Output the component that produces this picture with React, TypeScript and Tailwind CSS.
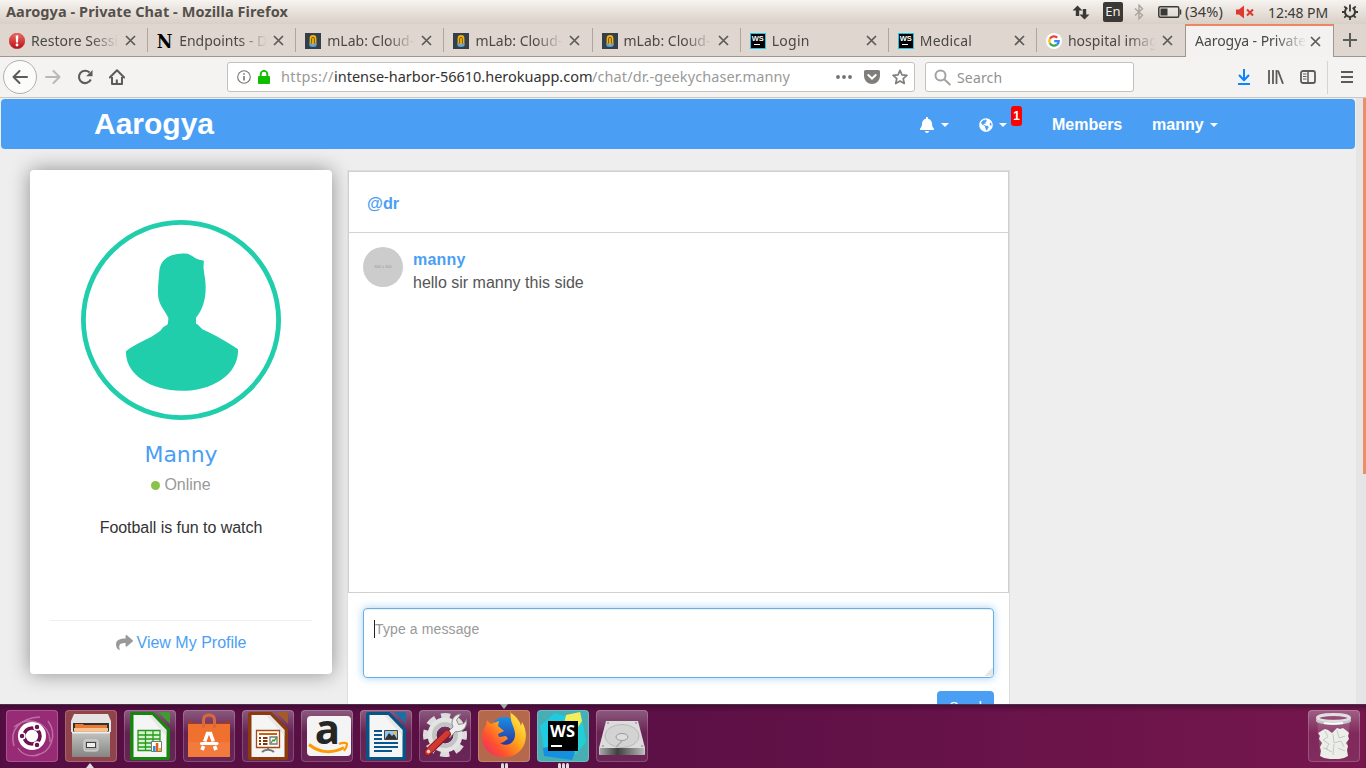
import React from "react";
import { FaBell, FaGlobeAmericas, FaShare } from "react-icons/fa";

const UI = "font-['Noto_Sans',sans-serif]";

function Close() {
  return (
    <svg className="h-[11px] w-[11px] shrink-0" viewBox="0 0 11 11" stroke="#5b5b58" strokeWidth="1.7">
      <path d="M1 1L10 10M10 1L1 10" />
    </svg>
  );
}

function ErrorIcon() {
  return (
    <svg className="h-4 w-4" viewBox="0 0 16 16">
      <defs>
        <linearGradient id="err" x1="0" y1="0" x2="0" y2="1">
          <stop offset="0" stopColor="#ee6a63" />
          <stop offset="1" stopColor="#b80f1a" />
        </linearGradient>
      </defs>
      <circle cx="8" cy="8" r="7.8" fill="url(#err)" stroke="#b3282a" strokeWidth=".5" />
      <path d="M6.7 2.5h2.6L9 9.5H7z" fill="#fff" />
      <circle cx="8" cy="12" r="1.4" fill="#fff" />
    </svg>
  );
}

function MLab() {
  return (
    <svg className="h-4 w-4" viewBox="0 0 16 16">
      <rect width="16" height="16" fill="#353f4a" />
      <path d="M4.6 12V5.5a3.4 3.4 0 0 1 6.8 0V12z" fill="#f2b310" />
      <path d="M6.6 11V5.8a1.4 1.4 0 0 1 2.8 0V11" fill="none" stroke="#6b4c10" strokeWidth=".9" />
      <path d="M4.6 10h2v1.5h2.8V10h2v3.2c-2 1-4.8 1-6.8 0z" fill="#5ba3dc" />
    </svg>
  );
}

function WsSmall() {
  return (
    <div className="flex h-4 w-4 flex-col border border-[#1fc3e8] bg-black pl-px">
      <span className="font-['Liberation_Sans',sans-serif] text-[7.5px] font-bold leading-[9px] text-white">WS</span>
      <span className="ml-[2px] mt-[1px] h-px w-[6px] bg-white" />
    </div>
  );
}

function Google() {
  return (
    <svg className="h-4 w-4" viewBox="0 0 16 16">
      <circle cx="8" cy="8" r="8" fill="#fff" />
      <g fill="none" strokeWidth="2.3">
        <path d="M11.2 4.6A4.7 4.7 0 0 0 3.9 5.7" stroke="#ea4335" />
        <path d="M3.9 5.7A4.7 4.7 0 0 0 3.9 10.3" stroke="#fbbc05" />
        <path d="M3.9 10.3A4.7 4.7 0 0 0 11 11.6" stroke="#34a853" />
        <path d="M11 11.6A4.7 4.7 0 0 0 12.7 8.1H8.2" stroke="#4285f4" />
      </g>
    </svg>
  );
}

function SlabN() {
  return (
    <span className="block h-4 w-4 text-center font-['DejaVu_Serif',serif] text-[19px] font-bold leading-[16px] text-black">
      <span className="inline-block -translate-x-px scale-x-90">N</span>
    </span>
  );
}

const tabs: { title: string; icon: React.ReactNode; track: string }[] = [
  { title: "Restore Session", icon: <ErrorIcon />, track: "tracking-[0.05px]" },
  { title: "Endpoints - Dev", icon: <SlabN />, track: "tracking-[0px]" },
  { title: "mLab: Cloud-H", icon: <MLab />, track: "tracking-[0px]" },
  { title: "mLab: Cloud-H", icon: <MLab />, track: "tracking-[0px]" },
  { title: "mLab: Cloud-H", icon: <MLab />, track: "tracking-[0px]" },
  { title: "Login", icon: <WsSmall />, track: "tracking-[0.3px]" },
  { title: "Medical", icon: <WsSmall />, track: "tracking-[0.2px]" },
  { title: "hospital images", icon: <Google />, track: "tracking-[0.05px]" },
];

const fade = "[mask-image:linear-gradient(to_right,#000_60px,transparent_88px)]";

function TitleBar() {
  return (
    <div className={`${UI} flex h-6 shrink-0 items-center justify-between bg-gradient-to-b from-[#f6f3f0] to-[#d9cfc6] pl-[6px] pr-[8px] text-[14px] text-[#3c3b37]`}>
      <span className="text-[14.5px] font-bold tracking-[0.08px] text-[#55504b]">Aarogya - Private Chat - Mozilla Firefox</span>
      <div className="flex h-6 items-center">
        <svg className="mr-[13px] h-4 w-[18px]" viewBox="0 0 18 16" fill="#3a3936">
          <path d="M5.5 1.500L10.500 6.500H7.200v5.500H3.800V6.500H.5zM12.500 15.500L17.500 10.500H14.200V5h-3.400v5.500H7.500z" />
        </svg>
        <span className="mr-[11px] flex h-5 w-5 items-center justify-center rounded-[2px] bg-[#3a3936] text-[13px] text-[#f3efec]">En</span>
        <svg className="mr-[14px] h-4 w-[10px]" viewBox="0 0 10 16" fill="none" stroke="#aaa49e" strokeWidth="1.4">
          <path d="M1 4.500L8.500 11.300L5 14.800V1.200L8.500 4.700L1 11.500" />
        </svg>
        <svg className="mr-[3px] h-3 w-6" viewBox="0 0 24 12">
          <rect x=".8" y=".8" width="20" height="10.400" rx="1.500" fill="none" stroke="#3a3936" strokeWidth="1.500" />
          <rect x="2.500" y="2.500" width="7" height="7" fill="#3a3936" />
          <path d="M22.500 3.500v5" stroke="#3a3936" strokeWidth="1.500" />
        </svg>
        <span className="w-[38px] whitespace-nowrap text-[14.500px] tracking-[0.1px]">(34%)</span>
        <svg className="ml-[13px] mr-[14px] h-4 w-[18px]" viewBox="0 0 18 16" fill="#df382c">
          <path d="M0 5.500h3L8 1.500v13L3 10.500H0z" />
          <path d="M11 5.500l6 6M17 5.500l-6 6" stroke="#df382c" strokeWidth="2" />
        </svg>
        <span className="mr-[14px] w-[60px] whitespace-nowrap text-[14px] tracking-[-0.05px]">12:48 PM</span>
        <svg className="h-4 w-4" viewBox="0 0 16 16" fill="none" stroke="#3a3936">
          <path d="M5.300 3.700A5 5 0 1 0 10.700 3.700" strokeWidth="2" />
          <path d="M8 .5v7" strokeWidth="1.800" />
          <path d="M0 8h3M13 8h3M2.300 2.300l2 2M13.700 2.300l-2 2M2.300 13.700l2-2M13.700 13.700l-2-2M8 13v3" strokeWidth="1.800" />
        </svg>
      </div>
    </div>
  );
}

function TabStrip() {
  return (
    <div className={`${UI} flex h-[33px] shrink-0 bg-[#dfd6cf] text-[14px] text-[#4a4845]`}>
      {tabs.map((t, i) => (
        <div key={i} className="flex h-full w-[148.130px] items-center border-b border-[#9d9691]">
          <div className="flex h-full flex-1 items-center pl-[9px] pt-px">
            {t.icon}
            <span className={`ml-[6px] w-[90px] overflow-hidden whitespace-nowrap leading-[20px] ${fade} ${t.track}`}>{t.title}</span>
            <span className="ml-[4px]"><Close /></span>
          </div>
          {i < 7 && <div className="h-6 w-px bg-[#aea69f]" />}
        </div>
      ))}
      <div className="flex h-full w-[149px] flex-col border-x border-[#9d9691] bg-[#f3f2f0]">
        <div className="h-[2px] shrink-0 bg-[#ee8660]" />
        <div className="flex flex-1 items-center pb-px pl-[9px]">
          <span className="w-[112px] overflow-hidden whitespace-nowrap leading-[20px] tracking-[-0.050px] [mask-image:linear-gradient(to_right,#000_80px,transparent_112px)]">
            Aarogya - Private Chat
          </span>
          <span className="ml-[3px]"><Close /></span>
        </div>
      </div>
      <div className="flex flex-1 items-center justify-center border-b border-[#9d9691]">
        <svg className="h-[14px] w-[14px]" viewBox="0 0 14 14" stroke="#5b5b58" strokeWidth="2">
          <path d="M7 0v14M0 7h14" />
        </svg>
      </div>
    </div>
  );
}

function Toolbar() {
  return (
    <div className={`${UI} flex h-[41px] shrink-0 items-center border-b border-[#cbc8c5] bg-[#f4f3f1] pl-[3px] text-[14px]`}>
      <div className="flex h-[34px] w-[34px] items-center justify-center rounded-full border border-[#b2b0ad] bg-[#fbfbfa]">
        <svg className="h-4 w-4" viewBox="0 0 16 16" fill="none" stroke="#5b5b58" strokeWidth="2" strokeLinecap="round" strokeLinejoin="round">
          <path d="M15 8H1.500M7.500 2L1.500 8l6 6" />
        </svg>
      </div>
      <svg className="ml-[8px] h-4 w-4" viewBox="0 0 16 16" fill="none" stroke="#b9b8b5" strokeWidth="2" strokeLinecap="round" strokeLinejoin="round">
        <path d="M1 8h13.500M8.500 2l6 6-6 6" />
      </svg>
      <svg className="ml-[16px] h-4 w-4" viewBox="0 0 16 16" fill="none" stroke="#5b5b58" strokeWidth="2.100">
        <path d="M13.800 10.500A6.200 6.200 0 1 1 12.500 3.500" />
        <path d="M15.500 1v6.300H9.200z" fill="#5b5b58" stroke="none" />
      </svg>
      <svg className="ml-[16px] h-4 w-4" viewBox="0 0 16 16" fill="none" stroke="#5b5b58" strokeWidth="2" strokeLinejoin="round">
        <path d="M.8 8.500L8 1.300l7.200 7.200" strokeLinecap="round" />
        <path d="M3 8v7h10V8" />
        <path d="M7.800 15v-4.500" />
      </svg>
      <div className="ml-[102px] flex h-[30px] w-[688px] items-center rounded-[3px] border border-[#c3c1be] bg-white pl-[9px] text-[14.500px] text-[#9a9a98]">
        <svg className="h-[14px] w-[14px]" viewBox="0 0 14 14" fill="none" stroke="#777572">
          <circle cx="7" cy="7" r="6.300" strokeWidth="1.100" />
          <path d="M7 6v4.500M7 3.200v1.600" strokeWidth="1.600" />
        </svg>
        <svg className="ml-[7px] h-[14px] w-3" viewBox="0 0 12 14">
          <rect y="6" width="12" height="8" rx="1" fill="#12bc00" />
          <path d="M2.700 7V4.200a3.300 3.300 0 0 1 6.600 0V7" fill="none" stroke="#12bc00" strokeWidth="1.900" />
        </svg>
        <span className="ml-[11px] w-[53px] whitespace-nowrap tracking-[0.35px]">https://</span>
        <span className="w-[258px] whitespace-nowrap tracking-[-0.02px] text-[#33322f]">intense-harbor-56610.herokuapp.com</span>
        <span className="w-[199px] whitespace-nowrap tracking-[0.1px]">/chat/dr.-geekychaser.manny</span>
        <svg className="ml-[45px] h-4 w-4" viewBox="0 0 16 16" fill="#72716f">
          <circle cx="2" cy="8" r="1.900" /><circle cx="8" cy="8" r="1.900" /><circle cx="14" cy="8" r="1.900" />
        </svg>
        <svg className="ml-[12px] h-[14px] w-4" viewBox="0 0 16 14">
          <path d="M1.500 0h13A1.500 1.500 0 0 1 16 1.500V6A8 8 0 0 1 0 6V1.500A1.500 1.500 0 0 1 1.500 0z" fill="#7f7e7b" />
          <path d="M4.300 5L8 8.500 11.700 5" fill="none" stroke="#fff" strokeWidth="2" strokeLinecap="round" />
        </svg>
        <svg className="ml-[12px] h-4 w-4" viewBox="0 0 16 16" fill="none" stroke="#7f7e7b" strokeWidth="1.700" strokeLinejoin="round">
          <path d="M8 1.300l2 4.500 4.900.5-3.700 3.300 1.100 4.900L8 12l-4.300 2.500 1.100-4.900L1.100 6.300 6 5.800z" />
        </svg>
      </div>
      <div className="ml-[10px] flex h-[30px] w-[209px] items-center rounded-[3px] border border-[#c3c1be] bg-white pl-[8px] text-[#929190]">
        <svg className="h-[17px] w-[17px]" viewBox="0 0 17 17" fill="none" stroke="#a3a2a0" strokeWidth="2">
          <circle cx="6.500" cy="6.500" r="5" /><path d="M10.300 10.300l6 5.700" />
        </svg>
        <span className="ml-[6px] tracking-[0.15px]">Search</span>
      </div>
      <svg className="ml-[103px] h-4 w-[14px]" viewBox="0 0 14 16" fill="none" stroke="#0a84ff" strokeWidth="2" strokeLinejoin="round">
        <path d="M7 0v11M2 6l5 5.300L12 6" /><path d="M1 15h12" />
      </svg>
      <svg className="ml-[17px] h-[14px] w-4" viewBox="0 0 16 14" fill="none" stroke="#5b5b58" strokeWidth="1.800">
        <path d="M1 0v14M5 0v14M8.500 0v14M10 .5l5 13.300" />
      </svg>
      <svg className="ml-[16px] h-[14px] w-4" viewBox="0 0 16 14" fill="none" stroke="#5b5b58">
        <rect x="1" y="1" width="14" height="12" rx="2" strokeWidth="1.800" />
        <path d="M8 1v12" strokeWidth="1.500" /><path d="M3 4h3.500M3 6.500h3.500M3 9h3.500" />
      </svg>
      <div className="ml-[11px] h-[33px] w-px bg-[#d6d3d0]" />
      <svg className="ml-[13px] h-3 w-3" viewBox="0 0 12 12" stroke="#5b5b58" strokeWidth="2">
        <path d="M0 1h12M0 6h12M0 11h12" />
      </svg>
    </div>
  );
}

function Caret() {
  return <span className="h-0 w-0 border-x-4 border-t-4 border-x-transparent border-t-white" />;
}

function Navbar() {
  return (
    <div className="mx-px mt-px flex h-[50px] shrink-0 rounded-[4px] bg-[#4a9ff4] pl-[93px] font-bold text-white">
      <span className="w-[122px] text-[30px] leading-[49px]">Aarogya</span>
      <div className="flex h-full items-center pl-[703px] pt-px text-[16px] leading-[20px]">
        <FaBell className="h-[16px] w-[16px]" />
        <span className="ml-[6px] flex"><Caret /></span>
        <FaGlobeAmericas className="ml-[30px] h-[14px] w-[14px]" />
        <span className="ml-[6px] flex"><Caret /></span>
        <span className="-mt-[17px] ml-[4px] flex h-5 w-[11px] items-center justify-center rounded-[3px] bg-[#f00] text-[12px]">1</span>
        <span className="ml-[30px] w-[70px]">Members</span>
        <span className="ml-[30px] w-[52px]">manny</span>
        <span className="ml-[6px] flex"><Caret /></span>
      </div>
    </div>
  );
}

function ProfileCard() {
  return (
    <div className="flex h-[504px] w-[302px] shrink-0 flex-col items-center rounded-[4px] bg-white pt-[50px] shadow-[0_0_20px_rgba(0,0,0,0.400)]">
      <svg className="h-[200px] w-[200px]" viewBox="0 0 200 200">
        <circle cx="100" cy="100" r="97.600" fill="none" stroke="#20ceac" strokeWidth="4.800" />
        <path
          fill="#20ceac"
          d="M106.700 33.700C111 35.500 116 40.200 123 40.700C122.700 43 122.300 46 122.700 49.500C123.500 56 124.700 61 124.700 67.700C124.700 79 121.500 90.500 115 97.700V103.700C118.500 105 119.500 108.500 123 110C136 116 146 122 157 129.300C158 154 132 170.800 100.700 170.800S44 154 45 131.300C55 123 69 119 79 111C81 109.500 81 107.500 82.500 107C85 105.500 86 104.800 86.700 104.300C87 102 87.500 100 87.300 97.700C84 91 78.500 85 77.300 77.500C76.300 68 77.900 60 78.300 51C79.500 38 91 32.300 106.700 33.700Z"
        />
      </svg>
      <div className="mt-[19px] font-['DejaVu_Sans',sans-serif] text-[22px] leading-[32px] tracking-[-0.100px] text-[#4a9ff4]">Manny</div>
      <div className="mt-[4px] flex items-center text-[16px] leading-[20px] text-[#999]">
        <span className="mr-[4px] h-[9px] w-[9px] rounded-full bg-[#8bc34a]" />
        Online
      </div>
      <div className="mt-[23px] text-[16px] leading-[20px] tracking-[-0.040px] text-[#333]">Football is fun to watch</div>
      <div className="mt-[82px] flex w-[262px] justify-center border-t border-[#eee] pt-[11px] text-[16px] leading-[22px]">
        <FaShare className="mr-[4px] mt-[2px] h-[17px] w-[17px] text-[#999]" />
        <span className="text-[#4a9ff4]">View My Profile</span>
      </div>
    </div>
  );
}

function ChatPanel() {
  return (
    <div className="ml-[15px] flex h-[560px] w-[663px] shrink-0 flex-col border border-[#dedede] bg-white">
      <div className="flex h-[422px] shrink-0 flex-col border border-[#d0d0d0]">
        <div className="h-[61px] border-b border-[#d3d3d3] pl-[18px] pt-[21px] text-[16.300px] font-bold leading-[20px] text-[#4a9ff4]">@dr</div>
        <div className="flex pl-[14px] pt-[14px]">
          <div className="flex h-10 w-10 items-center justify-center rounded-full bg-[#ccc] text-[4px] text-[#999]">300 x 300</div>
          <div className="ml-[10px] pt-[1px] text-[16px] leading-[23px]">
            <div className="font-bold tracking-[0.200px] text-[#4a9ff4]">manny</div>
            <div className="text-[#555]">hello sir manny this side</div>
          </div>
        </div>
      </div>
      <div className="flex flex-col items-end px-[15px] pt-[15px]">
        <div className="flex h-[70px] w-full items-start rounded-[4px] border border-[#66afe9] pl-[10px] pt-[10px] shadow-[inset_0_1px_1px_rgba(0,0,0,0.075),0_0_8px_rgba(102,175,233,0.600)]">
          <span className="mt-px h-[18px] w-px bg-[#222]" />
          <span className="text-[14px] leading-[20px] tracking-[0.120px] text-[#999]">Type a message</span>
          <svg className="ml-auto mt-[49px] h-[8px] w-[8px]" viewBox="0 0 10 10" fill="#e6e6e6">
            <path d="M10 0v10H0v-2h2V6h2V4h2V2h2V0z" />
          </svg>
        </div>
        <div className="mt-[13px] flex h-[34px] w-[57px] justify-center rounded-[4px] bg-[#4a9ff4] pt-[6px] text-[14px] leading-[20px] text-white">Send</div>
      </div>
    </div>
  );
}

function Dash() {
  return (
    <svg viewBox="0 0 52 52" className="h-[52px] w-[52px]">
      <rect width="52" height="52" fill="#982b76" rx="3" />
      <g fill="none" stroke="#d49dc1" strokeWidth="1.500" opacity=".6">
        <path d="M8 36C3 20 14 8 34 7M30 45c15-2 22-20 12-34M8 17c17-13 36-3 36 15M12 38c4 7 14 10 22 6" />
      </g>
      <circle cx="26" cy="26" r="14" fill="#fff" />
      <circle cx="26" cy="26" r="8" fill="none" stroke="#6d1450" strokeWidth="3.600" />
      <g stroke="#fff" strokeWidth="1.500" fill="#6d1450">
        <circle cx="16" cy="26" r="3" /><circle cx="31" cy="17" r="3" /><circle cx="31" cy="35" r="3" />
      </g>
    </svg>
  );
}

function Files() {
  return (
    <svg viewBox="0 0 52 52" className="h-[52px] w-[52px]">
      <rect width="52" height="52" rx="3" fill="#91434b" />
      <path d="M9 4h34l3 7v11H6V11z" fill="#e4e3e1" />
      <path d="M8 13h36v9H8z" fill="#35312f" />
      <path d="M10 14h8l1 1h23v7H10z" fill="#e77a35" /><path d="M9 18h34v3H9z" fill="#f6c28d" />
      <path d="M7 22h38v25H7z" fill="url(#metal)" /><path d="M7 21.500h38v2H7z" fill="#eee" />
      <rect x="19" y="30" width="14" height="11" rx="2" fill="#b5b5b5" stroke="#ddd" />
      <rect x="21.500" y="32.500" width="9" height="5" fill="#eee" stroke="#444" />
    </svg>
  );
}

function Doc({ color, light, kind }: { color: string; light: string; kind: "calc" | "impress" | "writer" }) {
  return (
    <svg viewBox="0 0 52 52" className="h-[52px] w-[52px]">
      <path d="M8 2H29.500L46 18.500V48q0 2-2 2H8q-2 0-2-2V4q0-2 2-2z" fill={color} />
      <path d="M34 2H44q2 0 2 2v10z" fill={light} />
      <path d="M9.500 5H28L42.500 20V47h-33z" fill="#f5f5f5" />
      <path d="M28 5L42.500 20V26L24 5z" fill="#ddd" opacity=".6" />
      {kind === "calc" && (
        <g>
          <path d="M14 20h22v21H14z" fill="#d6f2cf" />
          <path d="M14 20.500h22v20H14zM14 25h22M14 29h22M14 33h22M14 37h22M21.500 20v21M29 20v21" fill="none" stroke="#249a1b" strokeWidth="1.300" />
          <path d="M27.500 31.500h10v10h-10z" fill="#fff" stroke="#777" />
          <path d="M29 36h2.500v5H29z" fill="#1e96e8" /><path d="M31.800 33h2.500v8h-2.500z" fill="#e85b1a" /><path d="M34.500 38h2.500v3h-2.500z" fill="#f1b800" />
        </g>
      )}
      {kind === "impress" && (
        <g fill="none" stroke="#a4480f" strokeWidth="1.300">
          <path d="M14.500 20.500h23v17h-23z" fill="#fff" />
          <path d="M17 24h18" strokeWidth="2" stroke="#c9600f" />
          <path d="M17 28h2M17 31h2M17 34h2M21 28h4.500M21 31h4.500M21 34h4.500" strokeWidth="1.800" stroke="#863509" />
          <path d="M28 27h7v7h-7z" stroke="#777" /><path d="M29 33l2-3 1 1 3-4" stroke="#3a9e30" />
          <path d="M26 38v2M20 42c3-3 9-3 12 0" stroke="#777" strokeWidth="2" />
        </g>
      )}
      {kind === "writer" && (
        <g stroke="#07568c" strokeWidth="1.800">
          <path d="M14 21h8M14 25h8M14 29h8M14 33h24M14 37h24M14 41h18" />
          <path d="M24.500 20.500h13v9h-13z" fill="#8fc7ef" stroke="#444" strokeWidth="1" />
          <path d="M25 29l4-6 3 3 2-2 3 5z" fill="#333" stroke="none" /><circle cx="35" cy="23" r="1.500" fill="#f0c32d" stroke="none" />
        </g>
      )}
    </svg>
  );
}

function Software() {
  return (
    <svg viewBox="0 0 52 52" className="h-[52px] w-[52px]">
      <path d="M5 14h42v33H5z" fill="#f0702f" /><path d="M5 14l2-4 3 3h32l3-3 2 4z" fill="#a4401c" />
      <path d="M5 32h42v15H5z" fill="#f58148" opacity=".6" />
      <path d="M20.500 18V10q0-5 5.500-5t5.500 5v8" fill="none" stroke="#d9683c" strokeWidth="3" />
      <path d="M19 40l1.500-4M33 40l-1.500-4M21.700 31.500L24.500 23.500h3L30.300 31.500" fill="none" stroke="#fff" strokeWidth="3.600" />
      <path d="M18.500 33.500h15.500" stroke="#fff" strokeWidth="3" strokeLinecap="round" />
    </svg>
  );
}

function Amazon() {
  return (
    <svg viewBox="0 0 52 52" className="h-[52px] w-[52px]">
      <rect x="6" y="6" width="44" height="40" rx="4" fill="#f4f4f4" />
      <text x="26.500" y="34" textAnchor="middle" fontFamily="Open Sans" fontWeight="700" fontSize="42" fill="#262626">a</text>
      <path d="M8 34.500c11 9 24 9 35 3" fill="none" stroke="#ff9900" strokeWidth="3" />
      <path d="M38 34c4-2 8-1 8 0s-1 4-3 7" fill="none" stroke="#ff9900" strokeWidth="2.200" />
    </svg>
  );
}

function Settings() {
  return (
    <svg viewBox="0 0 52 52" className="h-[52px] w-[52px]">
      <circle cx="26" cy="25" r="19" fill="none" stroke="#dcdcdc" strokeWidth="6" strokeDasharray="9 5.923" strokeDashoffset="4.500" />
      <circle cx="26" cy="25" r="13" fill="none" stroke="#e4e4e4" strokeWidth="9" />
      <circle cx="26" cy="25" r="11" fill="none" stroke="#c4c4c4" strokeWidth="4" />
      <path d="M27 24l7-7c-3-6 1-13 8-13l-4.500 6 2 4.500 5.500-1 2.500-4c1 9-5 13-11 12l-6 6.500z" fill="#eee" stroke="#8b8b8b" strokeWidth="1" />
      <path d="M9 42L28 24" stroke="#8e1515" strokeWidth="7.500" strokeLinecap="round" />
      <path d="M9 42L28 23.500" stroke="#d03a35" strokeWidth="5.500" strokeLinecap="round" />
      <circle cx="9.500" cy="41.500" r="1.700" fill="#f3d5d5" />
    </svg>
  );
}

function Firefox() {
  return (
    <svg viewBox="0 0 52 52" className="h-[52px] w-[52px]">
      <defs>
        <linearGradient id="fox" x1="1" y1="0" x2="0" y2="1">
          <stop offset=".1" stopColor="#fff04a" /><stop offset=".45" stopColor="#ffa21a" /><stop offset=".72" stopColor="#ff5030" /><stop offset="1" stopColor="#e8227f" />
        </linearGradient>
        <linearGradient id="blue" x1="0" y1="0" x2="0" y2="1">
          <stop offset="0" stopColor="#1a8fe8" /><stop offset="1" stopColor="#2a2f9a" />
        </linearGradient>
      </defs>
      <rect width="52" height="52" rx="3" fill="#b5694c" />
      <circle cx="27" cy="22" r="15" fill="url(#blue)" />
      <path d="M33 3c7 5 9 9 10 13l1-4c5 8 5 18 1 25-5 8-13 11-21 10C12 46 4 38 4 27c0-5 2-9 4-12l1-5c1 2 3 3 4 4 3-2 6-2 8-3l-1 5 6 5-6 3 1 3 7-1 2 3c-3 1-4 4-8 4 8 5 16-1 15-10-1-8-6-11-4-23z" fill="url(#fox)" />
    </svg>
  );
}

function WebStorm() {
  return (
    <div className="flex h-[52px] w-[52px] bg-[#47aeb4]">
      <svg viewBox="0 0 52 52" className="h-[52px] w-[52px] shrink-0">
        <path d="M3 16L18 3l12 4v30L8 44z" fill="#1fcbe3" />
        <path d="M26 12L44 3l5 29-10 12-18 4z" fill="#22cfd6" />
        <path d="M29 5l14-3 2 9-8 12H25z" fill="#f4ee5c" />
        <path d="M6 38l20-4 12 8-3 8L7 46z" fill="#158fe0" />
        <rect x="11" y="11" width="30" height="30" fill="#000" />
        <text x="13" y="27" fontFamily="Open Sans" fontWeight="700" fontSize="15.500" textLength="25" lengthAdjust="spacingAndGlyphs" fill="#fff">WS</text>
        <rect x="14" y="35" width="11" height="2" fill="#fff" />
      </svg>
    </div>
  );
}

function Drive() {
  return (
    <svg viewBox="0 0 52 52" className="h-[52px] w-[52px]">
      <path d="M10 11h32l7 27v6q0 1-2 1H5q-2 0-2-1v-6z" fill="#dcdcdc" />
      <path d="M3.500 38h45v5.500q0 1.500-2 1.500H5.500q-2 0-2-1.500z" fill="url(#driveFront)" />
      <ellipse cx="26" cy="26" rx="17" ry="11.500" fill="#d3d3d3" stroke="#b8b8b8" /><ellipse cx="26" cy="27" rx="6" ry="3.500" fill="#ddd" stroke="#999" />
      <g fill="#999"><circle cx="12" cy="13" r=".9" /><circle cx="40" cy="13" r=".9" /><circle cx="7" cy="36" r=".9" /><circle cx="46" cy="36" r=".9" /></g>
      <path d="M26 31l-6 6" stroke="#aaa" strokeWidth="1.500" />
    </svg>
  );
}

function Trash() {
  return (
    <svg viewBox="0 0 52 52" className="h-[52px] w-[52px]">
      <path d="M9 9l3 35q14 6 27 0l3-35z" fill="#fff" opacity=".13" />
      <path d="M13 45q13 4 25 0l-1 2q-12 3-23 0z" fill="#3b3337" />
      <path d="M10 23l5-3 2-1 3 1 4 3 3-3 2-2 3 1 3-1 4 3 2 2-1 3 1 3-3 4 2 3-1 4 1 6-4 2-5 1h-9l-6-1-4-2 1-5-1-4 2-4-3-4 1-3z" fill="#eceeea" />
      <path d="M17 21l3 6-5 3 6 4-3 5 6 3M29 20l2 8 6-2M25 24l1 9 7-2 3 6M15 38l5 1M26 34l-1 11M30 38l7 3" fill="none" stroke="#c6cac1" strokeWidth="1" />
      <ellipse cx="25.500" cy="8" rx="16" ry="3.500" fill="none" stroke="#e0e0e0" strokeWidth="3" />
      <path d="M8 9c3 4 32 4 35 0v2c-2 5-33 5-35 0z" fill="#c6c6c6" />
      <path d="M16 13q9 1.500 19 0" stroke="#fff" strokeWidth="2" fill="none" />
    </svg>
  );
}

const dock: React.ReactNode[] = [
  <Dash />,
  <Files />,
  <Doc color="#188510" light="#3f9a30" kind="calc" />,
  <Software />,
  <Doc color="#8b3b0c" light="#a45a2b" kind="impress" />,
  <Amazon />,
  <Doc color="#075487" light="#1c6ea3" kind="writer" />,
  <Settings />,
  <Firefox />,
  <WebStorm />,
  <Drive />,
];

function Tile({ children, index }: { children: React.ReactNode; index: number }) {
  return (
    <div className="relative h-[52px] w-[52px] shrink-0">
      <div className="h-[52px] w-[52px] overflow-hidden rounded-[4px] bg-[linear-gradient(to_bottom,#ffffff50,#ffffff14_45%,#ffffff18)]">{children}</div>
      <div className="absolute inset-0 rounded-[4px] border border-[#ffffff30]" />
      {index === 1 && (
        <svg className="absolute -bottom-[6px] left-[20px] h-[5px] w-[10px]" viewBox="0 0 10 5" fill="#ddd"><path d="M1 5L5 0l4 5z" /></svg>
      )}
      {index === 8 && (
        <svg className="absolute -top-[6px] left-[22px] h-[5px] w-[8px]" viewBox="0 0 8 5" fill="#aaa"><path d="M0 0h8L4 5z" /></svg>
      )}
      {(index === 8 || index === 9) && (
        <div className="absolute -bottom-[6px] left-0 flex h-[5px] w-full justify-center gap-px">
          {Array.from({ length: index - 6 }, (_, i) => <span key={i} className="h-[5px] w-[3px] rounded-t-[2px] bg-[#ddd]" />)}
        </div>
      )}
    </div>
  );
}

export default function App() {
  return (
    <div className="flex h-[768px] w-[1366px] flex-col overflow-hidden bg-[#eee] font-['Liberation_Sans',Arial,sans-serif]">
      <svg className="absolute h-0 w-0">
        <defs>
          <linearGradient id="metal" x1="0" y1="0" x2="0" y2="1"><stop stopColor="#c3c3c2" /><stop offset="1" stopColor="#858584" /></linearGradient>
          <linearGradient id="driveFront"><stop stopColor="#aaa" /><stop offset=".4" stopColor="#3f3f3f" /><stop offset="1" stopColor="#bbb" /></linearGradient>
        </defs>
      </svg>
      <TitleBar />
      <TabStrip />
      <Toolbar />
      <div className="flex h-[606px] shrink-0 overflow-hidden">
        <div className="flex w-[1356px] flex-col">
          <Navbar />
          <div className="flex items-start pl-[30px] pt-[21px]">
            <ProfileCard />
            <ChatPanel />
          </div>
        </div>
        <div className="flex w-[10px] justify-end bg-[#e5e5e5]">
          <div className="h-[376px] w-[3px] bg-[#ee8d68]" />
        </div>
      </div>
      <div className="flex h-16 shrink-0 justify-between border-t border-[#4c3148] bg-[linear-gradient(to_right,#550e43,#5c1045_50%,#76174e)] px-[6px] pt-[5px] shadow-[inset_0_5px_4px_-2px_#32062988]">
        <div className="flex gap-[7px]">
          {dock.map((icon, i) => <Tile key={i} index={i}>{icon}</Tile>)}
        </div>
        <Tile index={20}><Trash /></Tile>
      </div>
    </div>
  );
}
